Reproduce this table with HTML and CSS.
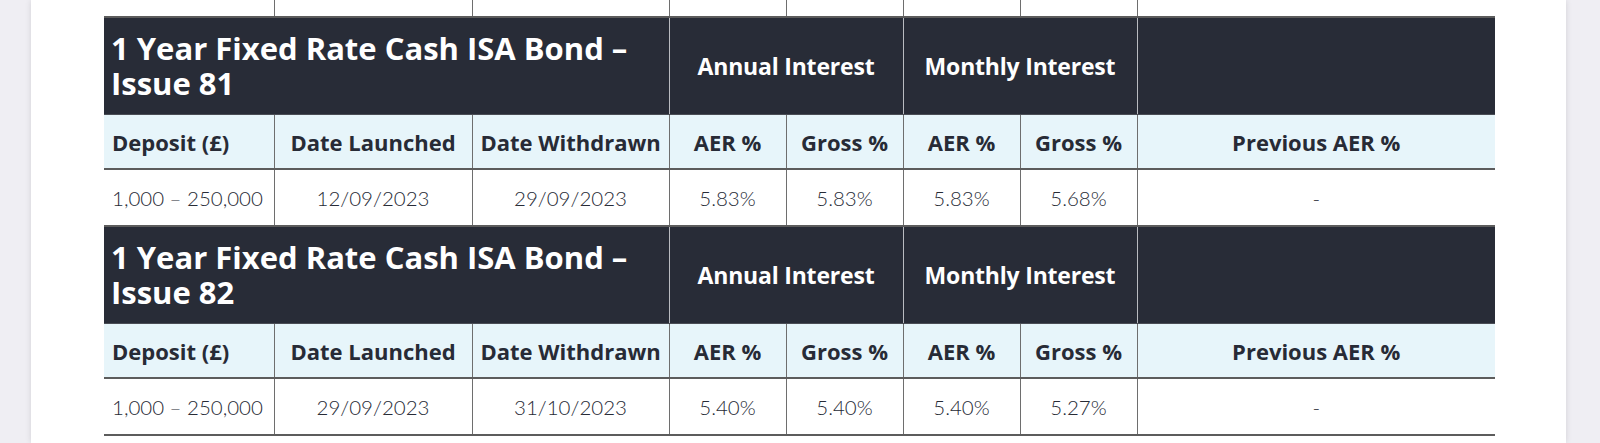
FILE: index.html
```html
<!DOCTYPE html>
<html lang="en">
<head>
<meta charset="utf-8">
<title>Fixed Rate Cash ISA Bond rates</title>
<link rel="stylesheet" href="styles.css">
</head>
<body>
<div class="card">
  <table class="rates">
    <colgroup>
      <col class="c-dep"><col class="c-launch"><col class="c-wd">
      <col class="c-pct"><col class="c-pct"><col class="c-pct"><col class="c-pct">
      <col class="c-prev">
    </colgroup>
    <tbody>
      <tr class="data">
        <td class="left">1,000 – 250,000</td><td>01/09/2023</td><td>12/09/2023</td>
        <td>5.75%</td><td>5.75%</td><td>5.75%</td><td>5.61%</td><td>-</td>
      </tr>
    </tbody>
    <tbody>
      <tr class="title-row">
        <th colspan="3" class="title">1 Year Fixed Rate Cash ISA Bond –<br>Issue 81</th>
        <th colspan="2" class="group">Annual Interest</th>
        <th colspan="2" class="group">Monthly Interest</th>
        <th class="group"></th>
      </tr>
      <tr class="heads">
        <th class="left">Deposit (£)</th><th>Date Launched</th><th>Date Withdrawn</th>
        <th>AER %</th><th>Gross %</th><th>AER %</th><th>Gross %</th><th>Previous AER %</th>
      </tr>
      <tr class="data">
        <td class="left">1,000 – 250,000</td><td>12/09/2023</td><td>29/09/2023</td>
        <td>5.83%</td><td>5.83%</td><td>5.83%</td><td>5.68%</td><td>-</td>
      </tr>
    </tbody>
    <tbody>
      <tr class="title-row">
        <th colspan="3" class="title">1 Year Fixed Rate Cash ISA Bond –<br>Issue 82</th>
        <th colspan="2" class="group">Annual Interest</th>
        <th colspan="2" class="group">Monthly Interest</th>
        <th class="group"></th>
      </tr>
      <tr class="heads">
        <th class="left">Deposit (£)</th><th>Date Launched</th><th>Date Withdrawn</th>
        <th>AER %</th><th>Gross %</th><th>AER %</th><th>Gross %</th><th>Previous AER %</th>
      </tr>
      <tr class="data">
        <td class="left">1,000 – 250,000</td><td>29/09/2023</td><td>31/10/2023</td>
        <td>5.40%</td><td>5.40%</td><td>5.40%</td><td>5.27%</td><td>-</td>
      </tr>
    </tbody>
  </table>
</div>
</body>
</html>
```
FILE: styles.css
```css
html, body {
  margin: 0;
  padding: 0;
}
body {
  background: #efeef3;
  font-family: Lato, "Open Sans", "Liberation Sans", sans-serif;
  color: #272b36;
  overflow: hidden;
}
.card {
  margin-left: 31px;
  width: 1535px;
  height: 443px;
  background: #ffffff;
  box-shadow: 0 0 6px rgba(0, 0, 0, 0.12);
  padding-left: 73px;
  box-sizing: border-box;
  overflow: hidden;
}
.rates {
  border-collapse: collapse;
  table-layout: fixed;
  width: 1391px;
  margin-top: -39px;
}
.c-dep { width: 170px; }
.c-launch { width: 198px; }
.c-wd { width: 197px; }
.c-pct { width: 117px; }
.c-prev { width: 358px; }

.rates th,
.rates td {
  padding: 0 8px;
  text-align: center;
  border-left: 1px solid #6e6e6e;
  white-space: nowrap;
}
.rates tr > :first-child {
  border-left: none;
}
.rates .left {
  text-align: left;
}

.title-row th {
  background: #282c37;
  color: #ffffff;
  height: 96px;
  border-left-color: #b9bbc0;
  border-bottom: 1px solid #4a4d55;
  font-family: "Open Sans", Lato, sans-serif;
}
.title-row .title {
  text-align: left;
  font-size: 31px;
  line-height: 35px;
  font-weight: 700;
  padding: 0 7px;
  letter-spacing: 0;
}
.title-row .group {
  font-size: 23px;
  font-weight: 700;
  letter-spacing: -0.2px;
}

.heads th {
  background: #e7f5fa;
  height: 53px;
  font-family: "Open Sans", Lato, sans-serif;
  font-size: 22px;
  font-weight: 700;
  letter-spacing: 0;
  border-bottom: 2px solid #5c5c5c;
}

.data td {
  background: #ffffff;
  height: 55px;
  font-size: 20.5px;
  font-weight: 300;
  border-bottom: 2px solid #5c5c5c;
}
```
